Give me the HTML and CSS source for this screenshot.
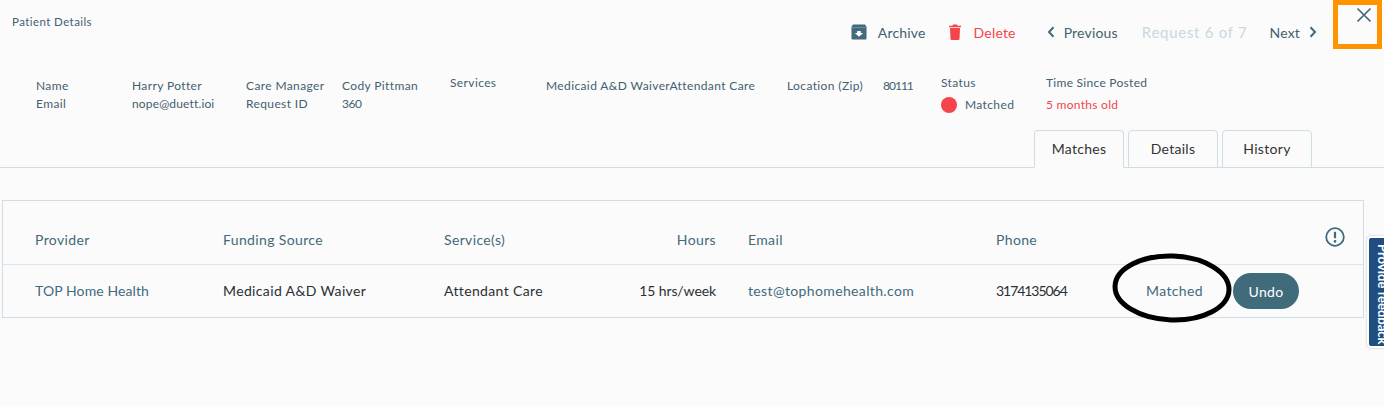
FILE: index.html
```html
<!DOCTYPE html>
<html lang="en">
<head>
<meta charset="utf-8">
<title>Patient Details</title>
<link rel="stylesheet" href="styles.css">
</head>
<body>
<div class="page">
  <header class="top">
    <div class="title">Patient Details</div>
    <nav class="actions">
      <a class="action archive">
        <svg viewBox="0 0 16 16" width="16" height="16"><path d="M2 .5h12l2 3H0z" fill="#43697a"/><path d="M.5 3.500h15v11a1 1 0 0 1-1 1h-13a1 1 0 0 1-1-1z" fill="#43697a"/><path d="M6.200 7h3.600v2H12.200L8 12.700 3.800 9h2.400z" fill="#fff"/></svg>
        <span>Archive</span>
      </a>
      <a class="action delete">
        <svg viewBox="0 0 12 16" width="12" height="16"><path d="M4 .5h4l.6 1.200H12v1.600H0V1.700h3.400z" fill="#f4444c"/><path d="M1 4h10l-.5 11a1 1 0 0 1-1 1h-7a1 1 0 0 1-1-1z" fill="#f4444c"/></svg>
        <span>Delete</span>
      </a>
      <a class="action prev">
        <svg viewBox="0 0 8 12" width="8" height="12"><path d="M6.500 1.200 2 6l4.500 4.800" fill="none" stroke="#43697a" stroke-width="2"/></svg>
        <span>Previous</span>
      </a>
      <span class="counter">Request 6 of 7</span>
      <a class="action next">
        <span>Next</span>
        <svg viewBox="0 0 8 12" width="8" height="12"><path d="M1.500 1.200 6 6l-4.500 4.800" fill="none" stroke="#43697a" stroke-width="2"/></svg>
      </a>
    </nav>
    <button class="close" aria-label="Close">
      <svg viewBox="0 0 16 16" width="16" height="16"><path d="M1.500 1.500l13 13M14.500 1.500l-13 13" stroke="#43697a" stroke-width="1.700" fill="none"/></svg>
    </button>
  </header>

  <section class="details">
    <div class="info-grid">
      <span>Name</span><span>Harry Potter</span><span>Care Manager</span><span>Cody Pittman</span>
      <span>Email</span><span class="tight">nope@duett.ioi</span><span>Request ID</span><span class="num">360</span>
    </div>
    <div class="services-label">Services</div>
    <div class="services-value">Medicaid A&amp;D WaiverAttendant Care</div>
    <div class="location-label">Location (Zip)</div>
    <div class="location-value zip">80111</div>
    <div class="status">
      <div>Status</div>
      <div class="status-value"><i class="dot"></i><span>Matched</span></div>
    </div>
    <div class="since">
      <div>Time Since Posted</div>
      <div class="old">5 months old</div>
    </div>
  </section>

  <div class="tabs">
    <a class="tab active">Matches</a>
    <a class="tab">Details</a>
    <a class="tab">History</a>
  </div>

  <section class="table">
    <div class="row head">
      <span>Provider</span>
      <span>Funding Source</span>
      <span>Service(s)</span>
      <span class="right">Hours</span>
      <span class="email">Email</span>
      <span>Phone</span>
      <span></span>
      <svg class="info" viewBox="0 0 20 20" width="20" height="20"><circle cx="10" cy="10" r="8.800" fill="none" stroke="#3f6b7b" stroke-width="1.800"/><path d="M10 4.800v6.400" stroke="#3f6b7b" stroke-width="2.200"/><circle cx="10" cy="14.400" r="1.300" fill="#3f6b7b"/></svg>
    </div>
    <div class="row body">
      <span class="link provider">TOP Home Health</span>
      <span>Medicaid A&amp;D Waiver</span>
      <span>Attendant Care</span>
      <span class="right hours">15 hrs/week</span>
      <span class="link email">test@tophomehealth.com</span>
      <span class="phone">3174135064</span>
      <span class="link">Matched</span>
      <button class="undo">Undo</button>
    </div>
  </section>
</div>

<svg class="ellipse" viewBox="0 0 124 74" width="124" height="74"><ellipse cx="62" cy="37" rx="57" ry="32" transform="rotate(2 62 37)" fill="none" stroke="#000" stroke-width="5"/></svg>
<div class="orange"></div>
<div class="feedback"><span>Provide feedback</span></div>
</body>
</html>
```

FILE: styles.css
```css
* { box-sizing: border-box; }
html, body { margin: 0; padding: 0; }
body {
  width: 1384px;
  height: 406px;
  overflow: hidden;
  background: #fbfbfb;
  font-family: "Lato", "Liberation Sans", sans-serif;
  color: #43606f;
  position: relative;
}
.page { width: 1384px; }

.top {
  height: 74px;
  display: flex;
  align-items: flex-start;
  padding-left: 12px;
}
.title { font-size: 11.500px; line-height: 14px; margin-top: 15px; letter-spacing: .42px; }
.actions {
  margin-left: auto;
  margin-top: 23px;
  display: flex;
  align-items: center;
  height: 18px;
  font-size: 14px;
  letter-spacing: .18px;
}
.action { display: flex; align-items: center; }
.archive { gap: 11px; margin-right: 23px; }
.delete { gap: 13px; color: #f4444c; margin-right: 31px; }
.prev { gap: 9px; margin-right: 24px; }
.counter { color: #c9d8df; font-size: 15px; margin-right: 22px; letter-spacing: .72px; }
.next { gap: 9px; }
.close {
  width: 22px;
  height: 22px;
  margin: 4px 9px 0 36px;
  padding: 0;
  border: 0;
  background: none;
  display: flex;
  align-items: center;
  justify-content: center;
}

.details {
  height: 56px;
  display: flex;
  align-items: flex-start;
  font-size: 12px;
  line-height: 18px;
  letter-spacing: .38px;
  padding-left: 36px;
}
.num { letter-spacing: -.4px; }
.zip { letter-spacing: -1px; }
.tight { letter-spacing: .15px; }
.info-grid {
  display: grid;
  grid-template-columns: 96px 114px 96px 108px;
  grid-auto-rows: 18px;
  margin-top: 3px;
}
.services-label { width: 96px; }
.services-value { width: 241px; margin-top: 3px; white-space: nowrap; }
.location-label { width: 96px; margin-top: 3px; }
.location-value { width: 58px; margin-top: 3px; }
.status { width: 105px; }
.status-value { display: flex; align-items: center; gap: 8px; margin-top: 4px; }
.dot { width: 16px; height: 16px; border-radius: 50%; background: #f4444c; display: block; }
.since { white-space: nowrap; letter-spacing: .28px; }
.old { color: #f4444c; margin-top: 4px; }

.tabs {
  height: 38px;
  display: flex;
  justify-content: flex-end;
  gap: 4px;
  padding-right: 72px;
  border-bottom: 1px solid #cfdde4;
}
.tab {
  width: 90px;
  height: 38px;
  border: 1px solid #cfdde4;
  border-radius: 4px 4px 0 0;
  font-size: 14px;
  line-height: 36px;
  text-align: center;
  color: #333;
  letter-spacing: .3px;
}
.tab.active { border-bottom-color: #fbfbfb; }

.table {
  margin: 32px 0 0 2px;
  width: 1362px;
  height: 118px;
  border: 1px solid #cfdde6;
}
.row {
  display: grid;
  grid-template-columns: 188px 221px 150px 122px 280px 150px 87px 1fr;
  align-items: center;
  padding-left: 32px;
  font-size: 14px;
  letter-spacing: .36px;
  color: #2a2f33;
  white-space: nowrap;
}
.head { height: 64px; padding-top: 14px; color: #43697a; border-bottom: 1px solid #dde6ea; }
.body { height: 52px; padding-bottom: 2px; }
.right { text-align: right; }
.hours { letter-spacing: -.1px; }
.email { padding-left: 32px; }
.link { color: #3f6b7b; }
.provider { letter-spacing: .1px; }
.phone { letter-spacing: -1.05px; }
.info { margin: -6px 0 0 92px; }
.undo {
  width: 66px;
  height: 36px;
  margin-top: 2px;
  border: 0;
  border-radius: 18px;
  background: #3f6b7b;
  color: #fff;
  font: inherit;
  letter-spacing: .3px;
  padding: 0;
}

.ellipse { position: absolute; left: 1110px; top: 251px; }
.orange {
  position: absolute;
  left: 1333px;
  top: 0;
  width: 49px;
  height: 49px;
  border: 5px solid #ff9400;
}
.feedback {
  position: absolute;
  left: 1367px;
  top: 236px;
  width: 30px;
  height: 112px;
  background: #1f4e80;
  border: 2px solid #fff;
  border-radius: 4px;
  box-shadow: 0 0 2px rgba(0,0,0,.3);
  color: #fff;
  font-size: 13px;
  font-weight: 700;
  overflow: hidden;
}
.feedback span {
  display: block;
  writing-mode: vertical-rl;
  white-space: nowrap;
  margin: 6px 0 0 6px;
  line-height: 15px;
}
```
